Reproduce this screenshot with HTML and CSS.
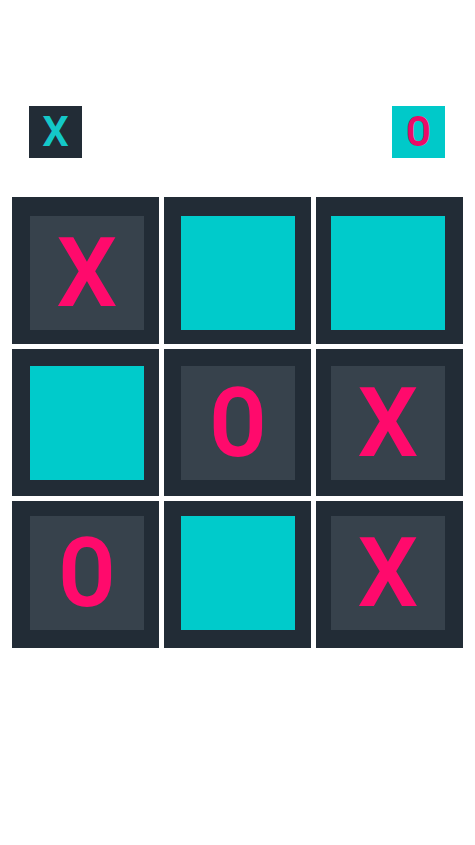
FILE: index.html
```html
<!DOCTYPE html>
<html>
<head>
<meta charset="utf-8">
<link rel="stylesheet" href="styles.css">
</head>
<body>
<div class="app">
  <div class="score">
    <div class="badge badge-x">X</div>
    <div class="badge badge-o">O</div>
  </div>
  <div class="board">
    <div class="cell"><div class="inner">X</div></div>
    <div class="cell"><div class="inner empty"></div></div>
    <div class="cell"><div class="inner empty"></div></div>
    <div class="cell"><div class="inner empty"></div></div>
    <div class="cell"><div class="inner o">O</div></div>
    <div class="cell"><div class="inner">X</div></div>
    <div class="cell"><div class="inner o">O</div></div>
    <div class="cell"><div class="inner empty"></div></div>
    <div class="cell"><div class="inner">X</div></div>
  </div>
</div>
</body>
</html>
```
FILE: styles.css
```css
html, body {
  margin: 0;
  padding: 0;
  background: #ffffff;
}
.app {
  width: 475px;
  height: 845px;
  font-family: Roboto, "Noto Sans", sans-serif;
}
.score {
  display: flex;
  justify-content: space-between;
  padding: 106px 30px 0 29px;
}
.badge {
  width: 53px;
  height: 52px;
  display: flex;
  align-items: center;
  justify-content: center;
  font-size: 42px;
  font-weight: 600;
  line-height: 1;
}
.badge-x {
  background: #222c36;
  color: #14c8c8;
}
.badge-o {
  background: #00c9c9;
  color: #ec0a66;
  font-stretch: condensed;
}
.board {
  margin: 39px 0 0 12px;
  width: 451px;
  display: grid;
  grid-template-columns: repeat(3, 147px);
  grid-template-rows: repeat(3, 147px);
  gap: 5px 5px;
}
.cell {
  background: #222c36;
  box-sizing: border-box;
  display: flex;
  padding: 17px 16px 16px 17px;
}
.cell:nth-child(3n+1) { padding-left: 18px; padding-right: 15px; }
.cell:nth-child(3n+3) { padding-left: 15px; padding-right: 18px; }
.cell:nth-child(-n+3) { padding-top: 19px; padding-bottom: 14px; }
.cell:nth-child(n+7) { padding-top: 15px; padding-bottom: 18px; }
.inner {
  flex: 1;
  background: #37424c;
  color: #ff0a6c;
  font-size: 96px;
  font-weight: 600;
  line-height: 1;
  display: flex;
  align-items: center;
  justify-content: center;
}
.inner.empty {
  background: #00cbcb;
}
.inner.o {
  font-stretch: condensed;
}
```
